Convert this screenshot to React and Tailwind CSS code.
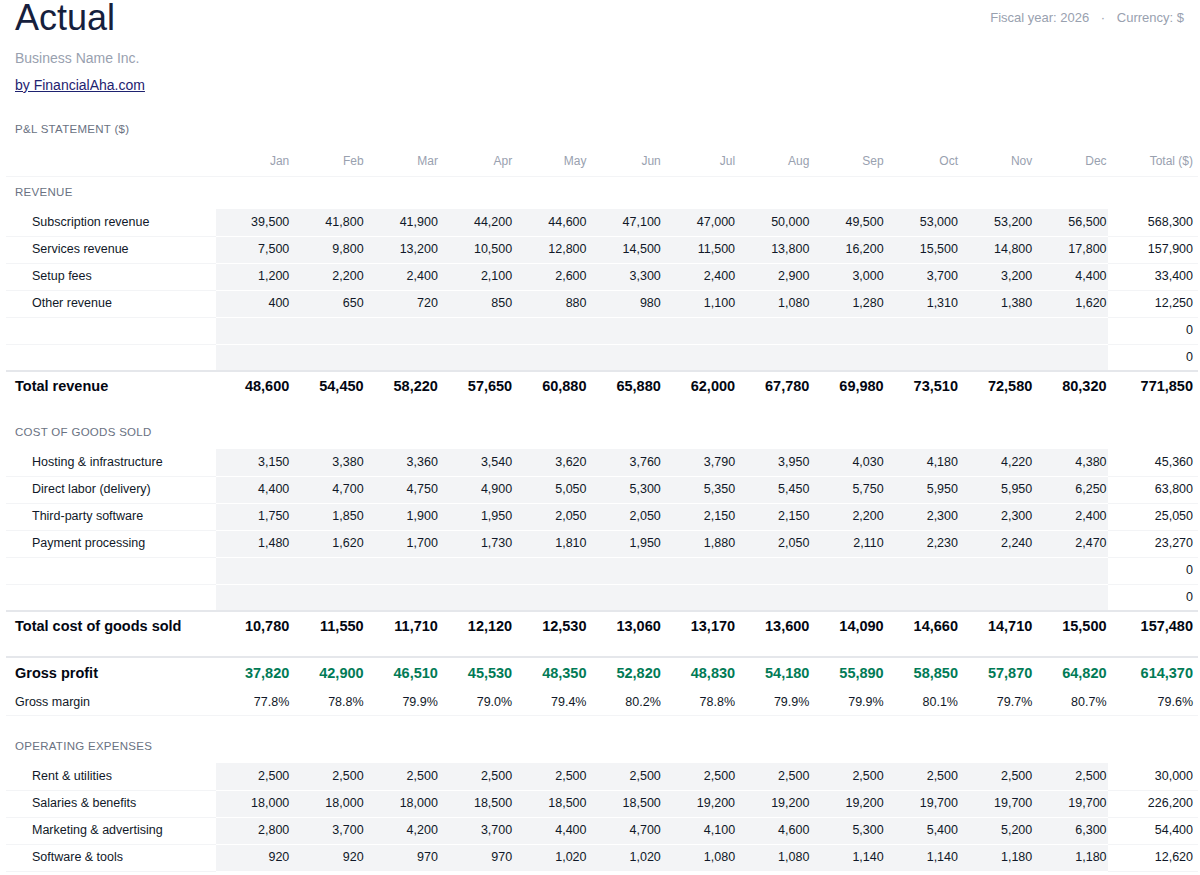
import React from "react";

const MONTHS = ["Jan", "Feb", "Mar", "Apr", "May", "Jun", "Jul", "Aug", "Sep", "Oct", "Nov", "Dec"];

const sections = [
  {
    title: "REVENUE",
    first: true,
    rows: [
      ["Subscription revenue", [39500, 41800, 41900, 44200, 44600, 47100, 47000, 50000, 49500, 53000, 53200, 56500]],
      ["Services revenue", [7500, 9800, 13200, 10500, 12800, 14500, 11500, 13800, 16200, 15500, 14800, 17800]],
      ["Setup fees", [1200, 2200, 2400, 2100, 2600, 3300, 2400, 2900, 3000, 3700, 3200, 4400]],
      ["Other revenue", [400, 650, 720, 850, 880, 980, 1100, 1080, 1280, 1310, 1380, 1620]],
      ["", null],
      ["", null],
    ],
    total: "Total revenue",
  },
  {
    title: "COST OF GOODS SOLD",
    rows: [
      ["Hosting & infrastructure", [3150, 3380, 3360, 3540, 3620, 3760, 3790, 3950, 4030, 4180, 4220, 4380]],
      ["Direct labor (delivery)", [4400, 4700, 4750, 4900, 5050, 5300, 5350, 5450, 5750, 5950, 5950, 6250]],
      ["Third-party software", [1750, 1850, 1900, 1950, 2050, 2050, 2150, 2150, 2200, 2300, 2300, 2400]],
      ["Payment processing", [1480, 1620, 1700, 1730, 1810, 1950, 1880, 2050, 2110, 2230, 2240, 2470]],
      ["", null],
      ["", null],
    ],
    total: "Total cost of goods sold",
  },
];

const opex = [
  ["Rent & utilities", [2500, 2500, 2500, 2500, 2500, 2500, 2500, 2500, 2500, 2500, 2500, 2500]],
  ["Salaries & benefits", [18000, 18000, 18000, 18500, 18500, 18500, 19200, 19200, 19200, 19700, 19700, 19700]],
  ["Marketing & advertising", [2800, 3700, 4200, 3700, 4400, 4700, 4100, 4600, 5300, 5400, 5200, 6300]],
  ["Software & tools", [920, 920, 970, 970, 1020, 1020, 1080, 1080, 1140, 1140, 1180, 1180]],
];

const fmt = (n) => n.toLocaleString("en-US");
const sum = (a) => a.reduce((s, v) => s + v, 0);

function colTotals(rows) {
  return MONTHS.map((_, i) => rows.reduce((s, r) => s + (r[1] ? r[1][i] : 0), 0));
}

function SectionRow({ title, tall }) {
  return (
    <tr className={tall ? "h-[48px]" : "h-[33px]"}>
      <td colSpan={14} className={`pl-[9px] text-[11.5px] text-gray-500 tracking-wide ${tall ? "pt-[14px]" : ""}`}>{title}</td>
    </tr>
  );
}

function DataRow({ label, vals }) {
  return (
    <tr className="h-[27px] text-[12.5px] text-gray-900">
      <td className="pl-[26px] border-b border-gray-100">{label}</td>
      {MONTHS.map((m, i) => (
        <td key={m} className="bg-gray-100 text-right border-b border-white pr-[1px]">{vals ? fmt(vals[i]) : ""}</td>
      ))}
      <td className="text-right border-b border-gray-100 pr-[5px]">{vals ? fmt(sum(vals)) : "0"}</td>
    </tr>
  );
}

function TotalRow({ label, vals, green, h = "h-[30px]" }) {
  const c = green ? "text-emerald-700" : "text-gray-950";
  return (
    <tr className={`${h} text-[14.5px] font-bold border-t-2 border-gray-200`}>
      <td className="pl-[9px] text-gray-950">{label}</td>
      {vals.map((v, i) => (
        <td key={i} className={`text-right pr-[1px] ${c}`}>{fmt(v)}</td>
      ))}
      <td className={`text-right pr-[5px] ${c}`}>{fmt(sum(vals))}</td>
    </tr>
  );
}

export default function App() {
  const rev = colTotals(sections[0].rows);
  const cogs = colTotals(sections[1].rows);
  const gp = rev.map((v, i) => v - cogs[i]);
  const totals = [rev, cogs];

  return (
    <div className="min-h-screen bg-white" style={{ fontFamily: "'Liberation Sans', Arial, sans-serif" }}>
      <div className="flex justify-between px-[15px]">
        <div>
          <h1 className="text-[36px] leading-[36px] text-[#16203d]">Actual</h1>
          <div className="text-[14px] text-gray-400 mt-[12px]">Business Name Inc.</div>
          <a href="#" className="block text-[14px] text-[#1e2270] underline mt-[6px]">by FinancialAha.com</a>
          <div className="text-[11.5px] text-gray-500 mt-[25px] tracking-wide">P&amp;L STATEMENT ($)</div>
        </div>
        <div className="text-[13px] text-gray-400 pt-[8px] pr-[1px]">
          Fiscal year: 2026 <span className="mx-[8px]">·</span> Currency: $
        </div>
      </div>

      <table className="ml-[6px] w-[1192px] table-fixed border-collapse mt-[8px]">
        <colgroup>
          <col className="w-[210px]" />
          {MONTHS.map((m) => <col key={m} className="w-[74.3px]" />)}
          <col />
        </colgroup>
        <tbody>
          <tr className="h-[30px] text-[12px] text-gray-400 border-b border-gray-100">
            <td />
            {MONTHS.map((m) => <td key={m} className="text-right pr-[1px]">{m}</td>)}
            <td className="text-right pr-[5px]">Total ($)</td>
          </tr>
          {sections.map((s, si) => (
            <React.Fragment key={s.title}>
              <SectionRow title={s.title} tall={!s.first} />
              {s.rows.map((r, i) => <DataRow key={i} label={r[0]} vals={r[1]} />)}
              <TotalRow label={s.total} vals={totals[si]} h={si === 0 ? "h-[30px]" : "h-[31px]"} />
            </React.Fragment>
          ))}
          <tr className="h-[15px]"><td colSpan={14} /></tr>
          <TotalRow label="Gross profit" vals={gp} green h="h-[32px]" />
          <tr className="h-[26px] text-[12.5px] text-gray-900 border-b border-gray-100">
            <td className="pl-[9px]">Gross margin</td>
            {gp.map((v, i) => (
              <td key={i} className="text-right pr-[1px]">{((v / rev[i]) * 100).toFixed(1)}%</td>
            ))}
            <td className="text-right pr-[5px]">{((sum(gp) / sum(rev)) * 100).toFixed(1)}%</td>
          </tr>
          <SectionRow title="OPERATING EXPENSES" tall />
          {opex.map((r, i) => <DataRow key={i} label={r[0]} vals={r[1]} />)}
        </tbody>
      </table>
    </div>
  );
}
